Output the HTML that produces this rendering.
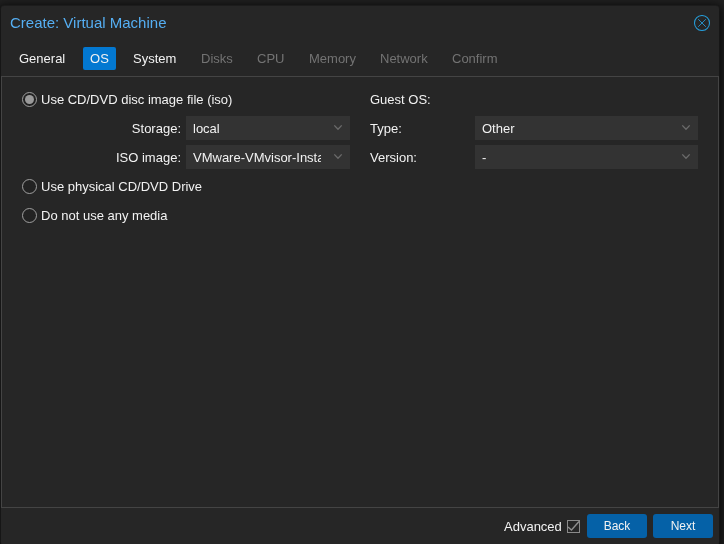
<!DOCTYPE html>
<html><head><meta charset="utf-8">
<style>
html,body{margin:0;padding:0;width:724px;height:544px;overflow:hidden;background:#202020;}
body{font-family:"Liberation Sans",sans-serif;font-size:13px;color:#f2f2f2;position:relative;}
.abs{will-change:transform;}
.win{position:absolute;left:1px;top:6px;width:718px;height:539px;background:#262626;border-radius:3px;box-shadow:0 -0.5px 0 0.5px #1c1c1c, 0 2px 8px 3px rgba(0,0,0,0.7);}
.abs{position:absolute;white-space:nowrap;}
.title{left:10px;top:14px;font-size:15px;color:#55aef2;line-height:18px;}
.close{left:694px;top:15px;width:16px;height:16px;}
.tab{top:47px;height:23px;line-height:23px;color:#f2f2f2;}
.tab.dis{color:#737373;}
.tab.act{background:#0378d1;border-radius:2px;left:83px;width:33px;text-align:center;}
.panel{left:1px;top:76px;width:716px;height:430px;border:1px solid #444;}
.lbl{line-height:24px;height:24px;}
.combo{background:#333;height:24px;line-height:24px;overflow:hidden;}
.combo span{position:absolute;left:7px;top:1px;white-space:nowrap;}
.chev{position:absolute;right:7px;top:6px;width:10px;height:10px;}
.radio{width:13px;height:13px;border:1px solid #8a8a8a;border-radius:50%;box-sizing:border-box;}
.btn{top:514px;width:60px;height:24px;line-height:24px;background:#0561a7;border-radius:3px;text-align:center;color:#f2f2f2;font-size:12px;}
</style></head><body>
<div class="win"></div>
<div class="abs title">Create: Virtual Machine</div>
<svg class="abs close" viewBox="0 0 16 16"><circle cx="8" cy="8" r="7.5" fill="none" stroke="#2699d3" stroke-width="1.05"/><path d="M4.2 4.2L11.8 11.8M11.8 4.2L4.2 11.8" stroke="#2699d3" stroke-width="0.9"/></svg>

<div class="abs tab" style="left:19px">General</div>
<div class="abs tab act">OS</div>
<div class="abs tab" style="left:133px">System</div>
<div class="abs tab dis" style="left:201px">Disks</div>
<div class="abs tab dis" style="left:257px">CPU</div>
<div class="abs tab dis" style="left:309px">Memory</div>
<div class="abs tab dis" style="left:380px">Network</div>
<div class="abs tab dis" style="left:452px">Confirm</div>

<div class="abs panel"></div>

<svg class="abs" style="left:22px;top:92px" width="15" height="15" viewBox="0 0 15 15"><circle cx="7.5" cy="7.5" r="7" fill="#222" stroke="#a0a0a0" stroke-width="1"/><circle cx="7.5" cy="7.5" r="4.5" fill="#9a9a9a"/></svg>
<div class="abs lbl" style="left:41px;top:88px">Use CD/DVD disc image file (iso)</div>
<div class="abs lbl" style="left:0;width:181px;text-align:right;top:117px">Storage:</div>
<div class="abs combo" style="left:186px;top:116px;width:164px"><span>local</span><svg class="chev" viewBox="0 0 10 10"><path d="M1.3 3.4L5 7.3L8.7 3.4" fill="none" stroke="#6b6b6b" stroke-width="1.3"/></svg></div>
<div class="abs lbl" style="left:0;width:181px;text-align:right;top:146px">ISO image:</div>
<div class="abs combo" style="left:186px;top:145px;width:164px"><span style="width:128px;overflow:hidden">VMware-VMvisor-Installer-8.0U2.iso</span><svg class="chev" viewBox="0 0 10 10"><path d="M1.3 3.4L5 7.3L8.7 3.4" fill="none" stroke="#6b6b6b" stroke-width="1.3"/></svg></div>
<svg class="abs" style="left:22px;top:179px" width="15" height="15" viewBox="0 0 15 15"><circle cx="7.5" cy="7.5" r="7" fill="#222" stroke="#a0a0a0" stroke-width="1"/></svg>
<div class="abs lbl" style="left:41px;top:175px">Use physical CD/DVD Drive</div>
<svg class="abs" style="left:22px;top:208px" width="15" height="15" viewBox="0 0 15 15"><circle cx="7.5" cy="7.5" r="7" fill="#222" stroke="#a0a0a0" stroke-width="1"/></svg>
<div class="abs lbl" style="left:41px;top:204px">Do not use any media</div>

<div class="abs lbl" style="left:370px;top:88px">Guest OS:</div>
<div class="abs lbl" style="left:370px;top:117px">Type:</div>
<div class="abs combo" style="left:475px;top:116px;width:223px"><span>Other</span><svg class="chev" viewBox="0 0 10 10"><path d="M1.3 3.4L5 7.3L8.7 3.4" fill="none" stroke="#6b6b6b" stroke-width="1.3"/></svg></div>
<div class="abs lbl" style="left:370px;top:146px">Version:</div>
<div class="abs combo" style="left:475px;top:145px;width:223px"><span>-</span><svg class="chev" viewBox="0 0 10 10"><path d="M1.3 3.4L5 7.3L8.7 3.4" fill="none" stroke="#6b6b6b" stroke-width="1.3"/></svg></div>

<div class="abs lbl" style="left:504px;top:515px">Advanced</div>
<svg class="abs" style="left:567px;top:520px" width="13" height="13" viewBox="0 0 13 13"><rect x="0.5" y="0.5" width="12" height="12" fill="none" stroke="#8a8a8a"/><path d="M1 6.9L4.5 10L12 1.5" fill="none" stroke="#8e8e8e" stroke-width="1.4"/></svg>
<div class="abs btn" style="left:587px">Back</div>
<div class="abs btn" style="left:653px">Next</div>
</body></html>
